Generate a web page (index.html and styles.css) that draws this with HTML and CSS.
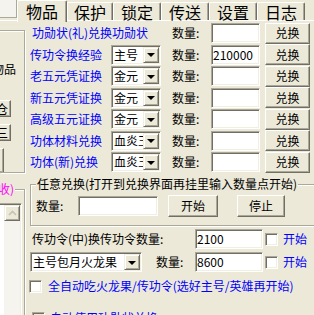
FILE: index.html
```html
<!DOCTYPE html>
<html>
<head>
    <meta charset="utf-8">
    <title>物品</title>
    <link rel="stylesheet" href="styles.css">
</head>
<body>
    <div class="tabs">
        <div class="tab-stub"></div>
        <div class="tab active">物品</div>
        <div class="tab first">保护</div>
        <div class="tab">锁定</div>
        <div class="tab">传送</div>
        <div class="tab">设置</div>
        <div class="tab">日志</div>
    </div>
    <div class="page">
        <div class="side">
            <div class="side-box">
                <div class="side-label">兑换物品</div>
                <div class="side-btn">开仓</div>
                <div class="side-btn">三</div>
                <div class="side-btn small"></div>
            </div>
            <div class="side-group">
                <div class="side-title">(自动回收)</div>
                <div class="side-list">
                    <div class="vscroll">
                        <div class="scroll-up">
                            <svg width="9" height="6" viewBox="0 0 9 6"><polyline points="1,5 4.5,1.5 8,5" fill="none" stroke="#c4c2b8" stroke-width="1.6"/></svg>
                        </div>
                    </div>
                </div>
            </div>
        </div>

        <div class="main">
            <div class="rows">
                <div class="row">
                    <span class="name wide">功勋状(礼)兑换功勋状</span>
                    <span class="qty">数量:</span>
                    <span class="edit"></span>
                    <span class="btn">兑换</span>
                </div>
                <div class="row">
                    <span class="name">传功令换经验</span>
                    <span class="combo"><span class="combo-text">主号</span><span class="drop"></span></span>
                    <span class="qty">数量:</span>
                    <span class="edit">210000</span>
                    <span class="btn">兑换</span>
                </div>
                <div class="row">
                    <span class="name">老五元凭证换</span>
                    <span class="combo"><span class="combo-text">金元</span><span class="drop"></span></span>
                    <span class="qty">数量:</span>
                    <span class="edit"></span>
                    <span class="btn">兑换</span>
                </div>
                <div class="row">
                    <span class="name">新五元凭证换</span>
                    <span class="combo"><span class="combo-text">金元</span><span class="drop"></span></span>
                    <span class="qty">数量:</span>
                    <span class="edit"></span>
                    <span class="btn">兑换</span>
                </div>
                <div class="row">
                    <span class="name">高级五元证换</span>
                    <span class="combo"><span class="combo-text">金元</span><span class="drop"></span></span>
                    <span class="qty">数量:</span>
                    <span class="edit"></span>
                    <span class="btn">兑换</span>
                </div>
                <div class="row">
                    <span class="name">功体材料兑换</span>
                    <span class="combo"><span class="combo-text">血炎玉</span><span class="drop"></span></span>
                    <span class="qty">数量:</span>
                    <span class="edit"></span>
                    <span class="btn">兑换</span>
                </div>
                <div class="row">
                    <span class="name">功体(新)兑换</span>
                    <span class="combo"><span class="combo-text">血炎玉</span><span class="drop"></span></span>
                    <span class="qty">数量:</span>
                    <span class="edit"></span>
                    <span class="btn">兑换</span>
                </div>
            </div>

            <div class="group">
                <span class="legend">任意兑换(打开到兑换界面再挂里输入数量点开始)</span>
                <div class="group-row">
                    <span class="group-qty">数量:</span>
                    <span class="edit any"></span>
                    <span class="btn start">开始</span>
                    <span class="btn stop">停止</span>
                </div>
            </div>

            <div class="line line-a">
                <span class="line-label">传功令(中)换传功令数量:</span>
                <span class="edit num">2100</span>
                <span class="check"></span>
                <span class="link">开始</span>
            </div>
            <div class="line line-b">
                <span class="combo big"><span class="combo-text">主号包月火龙果</span><span class="drop"></span></span>
                <span class="qty">数量:</span>
                <span class="edit num">8600</span>
                <span class="check"></span>
                <span class="link">开始</span>
            </div>
            <div class="line line-c">
                <span class="check"></span>
                <span class="link">全自动吃火龙果/传功令(选好主号/英雄再开始)</span>
            </div>
            <div class="line line-d">
                <span class="check"></span>
                <span class="link">自动使用功勋状兑换</span>
            </div>
        </div>
    </div>
</body>
</html>
```

FILE: styles.css
```css
body {
    margin: 0;
    width: 314px;
    height: 315px;
    overflow: hidden;
    background-color: #ece9d8;
    font-family: "Noto Sans CJK SC", "Noto Sans", sans-serif;
    font-size: 12px;
    line-height: 14px;
    color: #000;
}

/* tab strip */
.tabs {
    display: flex;
    align-items: flex-start;
    height: 20px;
    border-bottom: 1px solid #fff;
    margin-bottom: 1px;
}
.tab-stub {
    width: 16px;
    height: 17px;
    background-color: #f4f3ee;
    border-right: 1px solid #aca899;
    border-bottom: 1px solid #aca899;
}
.tab {
    box-sizing: border-box;
    width: 48px;
    height: 18px;
    margin-top: 2px;
    border-top: 1px solid #fff;
    border-left: 1px solid #fff;
    border-right: 1px solid #716f64;
    border-radius: 2px 2px 0 0;
    box-shadow: inset -1px 0 0 #aca899;
    font-size: 16px;
    line-height: 16px;
    text-align: center;
    padding-top: 1px;
}
.tab.first {
    width: 46px;
}
.tab.active {
    width: 50px;
    height: 22px;
    margin-top: 0;
    padding-top: 2px;
    background-color: #ece9d8;
}

.page {
    display: flex;
}

/* clipped left column */
.side {
    width: 26px;
    flex: none;
}
.side-box {
    box-sizing: border-box;
    width: 25px;
    height: 143px;
    margin-top: 8px;
    border-top: 1px solid #aca899;
    border-right: 1px solid #aca899;
    border-bottom: 1px solid #aca899;
    box-shadow: inset 0 1px 0 #fff, 1px 1px 0 #fff;
    display: flex;
    flex-direction: column;
}
.side-label {
    width: 16px;
    margin-top: 31px;
    display: flex;
    justify-content: flex-end;
    white-space: nowrap;
}
.side-btn {
    box-sizing: border-box;
    width: 11px;
    height: 17px;
    margin-top: 7px;
    padding-right: 2px;
    display: flex;
    align-items: center;
    justify-content: flex-end;
    white-space: nowrap;
    border-right: 1px solid #716f64;
    border-top: 1px solid #fff;
    border-bottom: 1px solid #716f64;
    box-shadow: inset -1px -1px 0 #aca899;
}
.side-box .side-label + .side-btn {
    margin-top: 24px;
}
.side-btn.small {
    width: 4px;
    height: 24px;
    border-bottom: none;
}
.side-group {
    position: relative;
    box-sizing: border-box;
    width: 25px;
    height: 140px;
    margin-top: 16px;
    border-top: 1px solid #aca899;
    border-right: 1px solid #aca899;
    box-shadow: inset 0 1px 0 #fff, 1px 0 0 #fff;
}
.side-title {
    position: absolute;
    right: 9px;
    top: -8px;
    padding-right: 1px;
    color: #ff00ff;
    white-space: nowrap;
    background-color: #ece9d8;
}
.side-list {
    box-sizing: border-box;
    width: 22px;
    height: 120px;
    margin-top: 13px;
    display: flex;
    justify-content: flex-end;
    background-color: #fff;
    border-top: 1px solid #aca899;
    border-right: 1px solid #fff;
    box-shadow: inset 0 1px 0 #716f64, inset -1px 0 0 #f1efe2;
    padding: 1px 1px 0 0;
}
.vscroll {
    width: 16px;
    background-color: #f5f4ef;
}
.scroll-up {
    box-sizing: border-box;
    width: 16px;
    height: 16px;
    display: flex;
    align-items: center;
    justify-content: center;
    background-color: #ece9d8;
    border: 1px solid;
    border-color: #f1efe2 #716f64 #716f64 #f1efe2;
    box-shadow: inset 1px 1px 0 #fff, inset -1px -1px 0 #aca899;
}

/* main panel */
.main {
    flex: 1;
    padding-left: 4px;
}
.row {
    display: flex;
    align-items: center;
    height: 22px;
}
.row:nth-child(even) {
    height: 21px;
}
.name {
    width: 81px;
    color: #0000ff;
    white-space: nowrap;
}
.name.wide {
    width: 140px;
    padding-left: 2px;
}
.qty {
    width: 39px;
    white-space: nowrap;
}

.edit {
    box-sizing: border-box;
    width: 49px;
    height: 20px;
    padding: 2px 0 0 1px;
    background-color: #fff;
    border: 1px solid;
    border-color: #aca899 #fff #fff #aca899;
    box-shadow: inset 1px 1px 0 #716f64, inset -1px -1px 0 #f1efe2;
    white-space: nowrap;
}

.btn {
    box-sizing: border-box;
    width: 45px;
    height: 21px;
    margin-left: 5px;
    display: flex;
    align-items: center;
    justify-content: center;
    background-color: #ece9d8;
    border: 1px solid;
    border-color: #fff #716f64 #716f64 #fff;
    box-shadow: inset -1px -1px 0 #aca899;
}

.combo {
    box-sizing: border-box;
    width: 50px;
    height: 20px;
    margin-right: 11px;
    display: flex;
    padding: 1px;
    background-color: #fff;
    border: 1px solid;
    border-color: #aca899 #fff #fff #aca899;
    box-shadow: inset 1px 1px 0 #716f64, inset -1px -1px 0 #f1efe2;
}
.combo-text {
    flex: 1;
    overflow: hidden;
    white-space: nowrap;
    padding: 1px 0 0 1px;
}
.drop {
    box-sizing: border-box;
    width: 16px;
    height: 16px;
    display: flex;
    align-items: center;
    justify-content: center;
    background-color: #ece9d8;
    border: 1px solid;
    border-color: #f1efe2 #716f64 #716f64 #f1efe2;
    box-shadow: inset 1px 1px 0 #fff, inset -1px -1px 0 #aca899;
}
.drop::after {
    content: "";
    border-top: 4px solid #000;
    border-left: 4px solid transparent;
    border-right: 4px solid transparent;
    margin-top: 1px;
}

/* free exchange group */
.group {
    position: relative;
    box-sizing: border-box;
    width: 292px;
    height: 42px;
    margin-top: 11px;
    padding: 10px 0 0 5px;
    border: 1px solid #aca899;
    box-shadow: inset 1px 1px 0 #fff, 1px 1px 0 #fff;
}
.legend {
    position: absolute;
    left: 5px;
    top: -8px;
    padding: 0 1px;
    white-space: nowrap;
    background-color: #ece9d8;
}
.group-row {
    display: flex;
    align-items: center;
    height: 22px;
}
.group-qty {
    width: 42px;
}
.edit.any {
    width: 80px;
}
.btn.start {
    width: 50px;
    height: 22px;
    margin-left: 10px;
}
.btn.stop {
    width: 48px;
    height: 22px;
    margin-left: 19px;
}

/* bottom lines */
.line {
    display: flex;
    align-items: center;
    white-space: nowrap;
}
.line-a,
.line-b {
    height: 22px;
}
.line-a {
    margin-top: 2px;
}
.line-b {
    margin-top: 1px;
}
.line-label {
    width: 163px;
    padding-left: 2px;
}
.edit.num {
    width: 68px;
}
.combo.big {
    width: 112px;
    margin-right: 14px;
}
.check {
    box-sizing: border-box;
    width: 13px;
    height: 13px;
    margin-left: 2px;
    background-color: #fff;
    border: 1px solid;
    border-color: #aca899 #fff #fff #aca899;
    box-shadow: inset 1px 1px 0 #716f64, inset -1px -1px 0 #f1efe2;
}
.link {
    margin-left: 5px;
    color: #0000ff;
}
.line-c {
    margin-top: 6px;
}
.line-c .check {
    margin-left: -1px;
}
.line-c .link {
    margin-left: 6px;
}
.line-d {
    margin-top: 18px;
}
.line-d .check {
    background-color: #ece9d8;
}
.line-d .link {
    margin-left: 5px;
}
```
